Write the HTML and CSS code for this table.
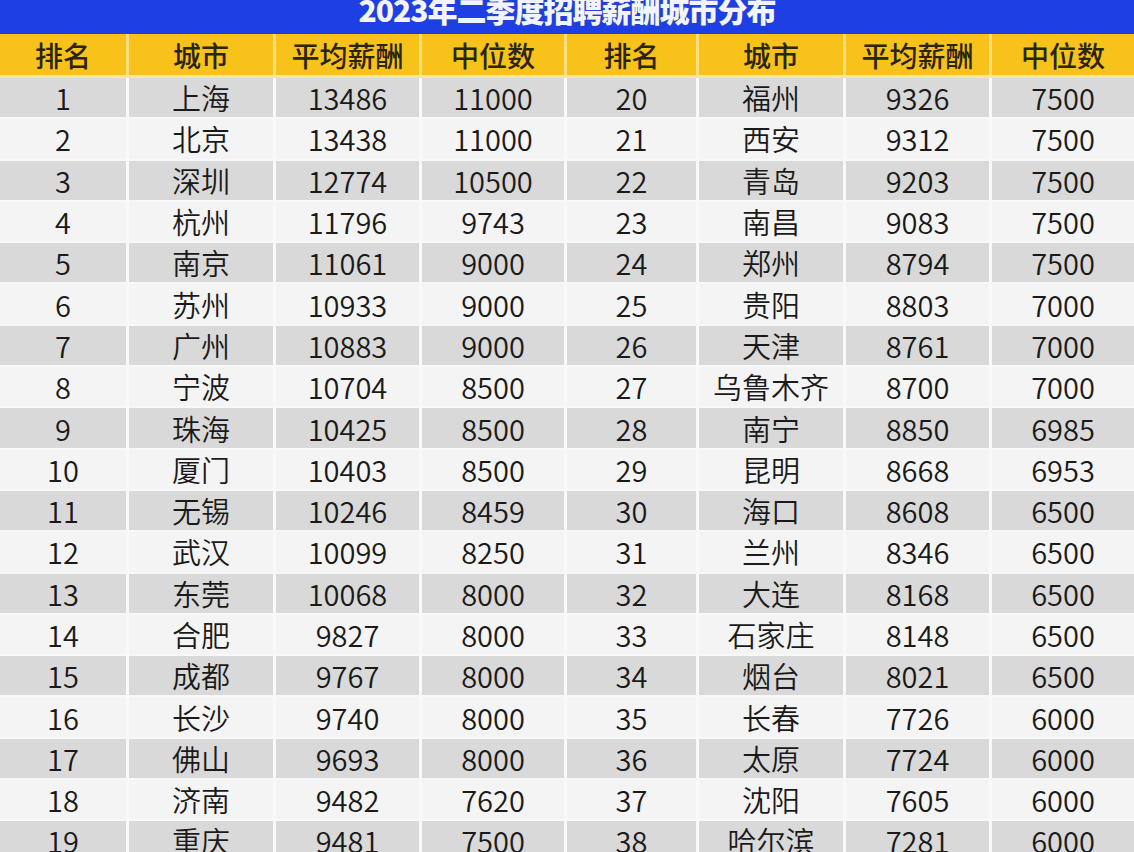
FILE: index.html
```html
<!DOCTYPE html>
<html lang="zh">
<head>
<meta charset="utf-8">
<title>2023年二季度招聘薪酬城市分布</title>
<link rel="stylesheet" href="styles.css">
</head>
<body>
<div class="sheet">
  <div class="title"><span class="title-text">2023年二季度招聘薪酬城市分布</span></div>
  <div class="row head">
    <div class="cell">排名</div><div class="cell">城市</div><div class="cell">平均薪酬</div><div class="cell">中位数</div>
    <div class="cell">排名</div><div class="cell">城市</div><div class="cell">平均薪酬</div><div class="cell">中位数</div>
  </div>
  <div class="row gray"><div class="cell">1</div><div class="cell">上海</div><div class="cell">13486</div><div class="cell">11000</div><div class="cell">20</div><div class="cell">福州</div><div class="cell">9326</div><div class="cell">7500</div></div>
  <div class="row light"><div class="cell">2</div><div class="cell">北京</div><div class="cell">13438</div><div class="cell">11000</div><div class="cell">21</div><div class="cell">西安</div><div class="cell">9312</div><div class="cell">7500</div></div>
  <div class="row gray"><div class="cell">3</div><div class="cell">深圳</div><div class="cell">12774</div><div class="cell">10500</div><div class="cell">22</div><div class="cell">青岛</div><div class="cell">9203</div><div class="cell">7500</div></div>
  <div class="row light"><div class="cell">4</div><div class="cell">杭州</div><div class="cell">11796</div><div class="cell">9743</div><div class="cell">23</div><div class="cell">南昌</div><div class="cell">9083</div><div class="cell">7500</div></div>
  <div class="row gray"><div class="cell">5</div><div class="cell">南京</div><div class="cell">11061</div><div class="cell">9000</div><div class="cell">24</div><div class="cell">郑州</div><div class="cell">8794</div><div class="cell">7500</div></div>
  <div class="row light"><div class="cell">6</div><div class="cell">苏州</div><div class="cell">10933</div><div class="cell">9000</div><div class="cell">25</div><div class="cell">贵阳</div><div class="cell">8803</div><div class="cell">7000</div></div>
  <div class="row gray"><div class="cell">7</div><div class="cell">广州</div><div class="cell">10883</div><div class="cell">9000</div><div class="cell">26</div><div class="cell">天津</div><div class="cell">8761</div><div class="cell">7000</div></div>
  <div class="row light"><div class="cell">8</div><div class="cell">宁波</div><div class="cell">10704</div><div class="cell">8500</div><div class="cell">27</div><div class="cell">乌鲁木齐</div><div class="cell">8700</div><div class="cell">7000</div></div>
  <div class="row gray"><div class="cell">9</div><div class="cell">珠海</div><div class="cell">10425</div><div class="cell">8500</div><div class="cell">28</div><div class="cell">南宁</div><div class="cell">8850</div><div class="cell">6985</div></div>
  <div class="row light"><div class="cell">10</div><div class="cell">厦门</div><div class="cell">10403</div><div class="cell">8500</div><div class="cell">29</div><div class="cell">昆明</div><div class="cell">8668</div><div class="cell">6953</div></div>
  <div class="row gray"><div class="cell">11</div><div class="cell">无锡</div><div class="cell">10246</div><div class="cell">8459</div><div class="cell">30</div><div class="cell">海口</div><div class="cell">8608</div><div class="cell">6500</div></div>
  <div class="row light"><div class="cell">12</div><div class="cell">武汉</div><div class="cell">10099</div><div class="cell">8250</div><div class="cell">31</div><div class="cell">兰州</div><div class="cell">8346</div><div class="cell">6500</div></div>
  <div class="row gray"><div class="cell">13</div><div class="cell">东莞</div><div class="cell">10068</div><div class="cell">8000</div><div class="cell">32</div><div class="cell">大连</div><div class="cell">8168</div><div class="cell">6500</div></div>
  <div class="row light"><div class="cell">14</div><div class="cell">合肥</div><div class="cell">9827</div><div class="cell">8000</div><div class="cell">33</div><div class="cell">石家庄</div><div class="cell">8148</div><div class="cell">6500</div></div>
  <div class="row gray"><div class="cell">15</div><div class="cell">成都</div><div class="cell">9767</div><div class="cell">8000</div><div class="cell">34</div><div class="cell">烟台</div><div class="cell">8021</div><div class="cell">6500</div></div>
  <div class="row light"><div class="cell">16</div><div class="cell">长沙</div><div class="cell">9740</div><div class="cell">8000</div><div class="cell">35</div><div class="cell">长春</div><div class="cell">7726</div><div class="cell">6000</div></div>
  <div class="row gray"><div class="cell">17</div><div class="cell">佛山</div><div class="cell">9693</div><div class="cell">8000</div><div class="cell">36</div><div class="cell">太原</div><div class="cell">7724</div><div class="cell">6000</div></div>
  <div class="row light"><div class="cell">18</div><div class="cell">济南</div><div class="cell">9482</div><div class="cell">7620</div><div class="cell">37</div><div class="cell">沈阳</div><div class="cell">7605</div><div class="cell">6000</div></div>
  <div class="row gray"><div class="cell">19</div><div class="cell">重庆</div><div class="cell">9481</div><div class="cell">7500</div><div class="cell">38</div><div class="cell">哈尔滨</div><div class="cell">7281</div><div class="cell">6000</div></div>
</div>
</body>
</html>
```

FILE: styles.css
```css
html, body {
  margin: 0;
  padding: 0;
  background: #f4f4f4;
  overflow: hidden;
}

.sheet {
  width: 1134px;
  height: 852px;
  overflow: hidden;
  font-family: "Noto Sans CJK SC", "Noto Sans", sans-serif;
  color: #1e1e1e;
}

.title {
  height: 34px;
  background: #1e3fe4;
  display: flex;
  justify-content: center;
  align-items: flex-start;
  overflow: hidden;
}

.title-text {
  font-size: 30px;
  line-height: 1;
  font-weight: 900;
  color: #f2f4fb;
  margin-top: -6px;
  letter-spacing: -1px;
  text-shadow: 0 0 1px #3a4a9a;
}

.row {
  display: grid;
  grid-template-columns: 129px 147px 146px 145px 132px 147px 146px 142px;
  height: 39.3px;
  border-bottom: 2px solid #f8f8f8;
}

.cell {
  display: flex;
  align-items: center;
  justify-content: center;
  font-size: 29px;
  font-weight: 350;
  line-height: 1;
  white-space: nowrap;
  color: #1a1a1a;
  border-right: 3px solid #f9f9f9;
}

.cell:last-child {
  border-right: none;
}

.head {
  height: 41px;
  background: #f7c219;
  border-bottom: 3px solid #fbe59a;
}

.head .cell {
  font-size: 28px;
  font-weight: 500;
  color: #2a2410;
  border-right-color: #fbdf7c;
}

.gray {
  background: #d9d9d9;
}

.light {
  background: #f4f4f4;
}
```
